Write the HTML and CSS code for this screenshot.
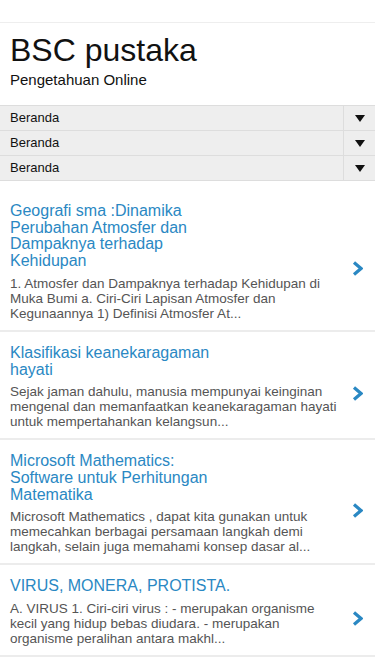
FILE: index.html
```html
<!DOCTYPE html>
<html lang="id">
<head>
  <meta charset="UTF-8" />
  <meta name="viewport" content="width=device-width, initial-scale=1" />
  <title>BSC pustaka</title>
  <link rel="stylesheet" href="styles.css">
</head>
<body>
  <div class="topbar"></div>

  <div class="header">
    <h1>BSC pustaka</h1>
    <p class="tagline">Pengetahuan Online</p>
  </div>

  <div class="menu">
    <div class="menu-row">
      <span class="menu-label">Beranda</span>
      <span class="menu-arrow"><svg width="10" height="7" viewBox="0 0 10 7"><polygon points="0,0 10,0 5,7" fill="#111"/></svg></span>
    </div>
    <div class="menu-row">
      <span class="menu-label">Beranda</span>
      <span class="menu-arrow"><svg width="10" height="7" viewBox="0 0 10 7"><polygon points="0,0 10,0 5,7" fill="#111"/></svg></span>
    </div>
    <div class="menu-row">
      <span class="menu-label">Beranda</span>
      <span class="menu-arrow"><svg width="10" height="7" viewBox="0 0 10 7"><polygon points="0,0 10,0 5,7" fill="#111"/></svg></span>
    </div>
  </div>

  <ul class="posts">
    <li class="post">
      <div class="post-text">
        <h2 class="post-title">Geografi sma :Dinamika Perubahan Atmosfer dan Dampaknya terhadap Kehidupan</h2>
        <p class="post-desc">1. Atmosfer dan Dampaknya terhadap Kehidupan di Muka Bumi a. Ciri-Ciri Lapisan Atmosfer dan Kegunaannya 1) Definisi Atmosfer At...</p>
      </div>
      <span class="chevron"><svg width="11" height="15" viewBox="0 0 11 15"><polyline points="2,1.5 9,7.5 2,13.5" fill="none" stroke="#2a88c3" stroke-width="3.2"/></svg></span>
    </li>
    <li class="post">
      <div class="post-text">
        <h2 class="post-title">Klasifikasi keanekaragaman hayati</h2>
        <p class="post-desc">Sejak jaman dahulu, manusia mempunyai keinginan mengenal dan memanfaatkan keanekaragaman hayati untuk mempertahankan kelangsun...</p>
      </div>
      <span class="chevron"><svg width="11" height="15" viewBox="0 0 11 15"><polyline points="2,1.5 9,7.5 2,13.5" fill="none" stroke="#2a88c3" stroke-width="3.2"/></svg></span>
    </li>
    <li class="post">
      <div class="post-text">
        <h2 class="post-title">Microsoft Mathematics: Software untuk Perhitungan Matematika</h2>
        <p class="post-desc">Microsoft Mathematics , dapat kita gunakan untuk memecahkan berbagai persamaan langkah demi langkah, selain juga memahami konsep dasar al...</p>
      </div>
      <span class="chevron"><svg width="11" height="15" viewBox="0 0 11 15"><polyline points="2,1.5 9,7.5 2,13.5" fill="none" stroke="#2a88c3" stroke-width="3.2"/></svg></span>
    </li>
    <li class="post">
      <div class="post-text">
        <h2 class="post-title">VIRUS, MONERA, PROTISTA.</h2>
        <p class="post-desc">A. VIRUS 1. Ciri-ciri virus : - merupakan organisme kecil yang hidup bebas diudara. - merupakan organisme peralihan antara makhl...</p>
      </div>
      <span class="chevron"><svg width="11" height="15" viewBox="0 0 11 15"><polyline points="2,1.5 9,7.5 2,13.5" fill="none" stroke="#2a88c3" stroke-width="3.2"/></svg></span>
    </li>
  </ul>
</body>
</html>
```

FILE: styles.css
```css
body {
  margin: 0;
  font-family: "Liberation Sans", Arial, sans-serif;
  background: #fff;
  color: #111;
}
.topbar {
  height: 22px;
  border-bottom: 1px solid #eee;
}
.header {
  padding: 9px 10px 0;
}
h1 {
  margin: 0;
  font-size: 32px;
  line-height: 36px;
  font-weight: normal;
  color: #111;
}
.tagline {
  margin: 3px 0 0;
  font-size: 15px;
  line-height: 17px;
}
.menu {
  margin-top: 17px;
  border-top: 1px solid #ddd;
}
.menu-row {
  display: flex;
  height: 24px;
  background: #eee;
  border-bottom: 1px solid #ddd;
}
.menu-label {
  flex: 1;
  padding-left: 10px;
  font-size: 13px;
  line-height: 24px;
  color: #111;
}
.menu-arrow {
  width: 31px;
  border-left: 1px solid #ddd;
  display: flex;
  align-items: center;
  justify-content: center;
}
.posts {
  list-style: none;
  margin: 9px 0 0;
  padding: 0;
}
.post {
  display: flex;
  align-items: center;
  padding: 13px 0 9px 10px;
  border-bottom: 2px solid #ececec;
}
.post-text {
  width: 333px;
}
.post-title {
  margin: 0;
  max-width: 222px;
  font-size: 16px;
  line-height: 16.7px;
  font-weight: normal;
  color: #2a88c3;
}
.post-desc {
  margin: 6px 0 0;
  font-size: 13.5px;
  line-height: 15px;
  color: #555;
}
.chevron {
  margin: 13px 0 0 9px;
  display: flex;
}
```
